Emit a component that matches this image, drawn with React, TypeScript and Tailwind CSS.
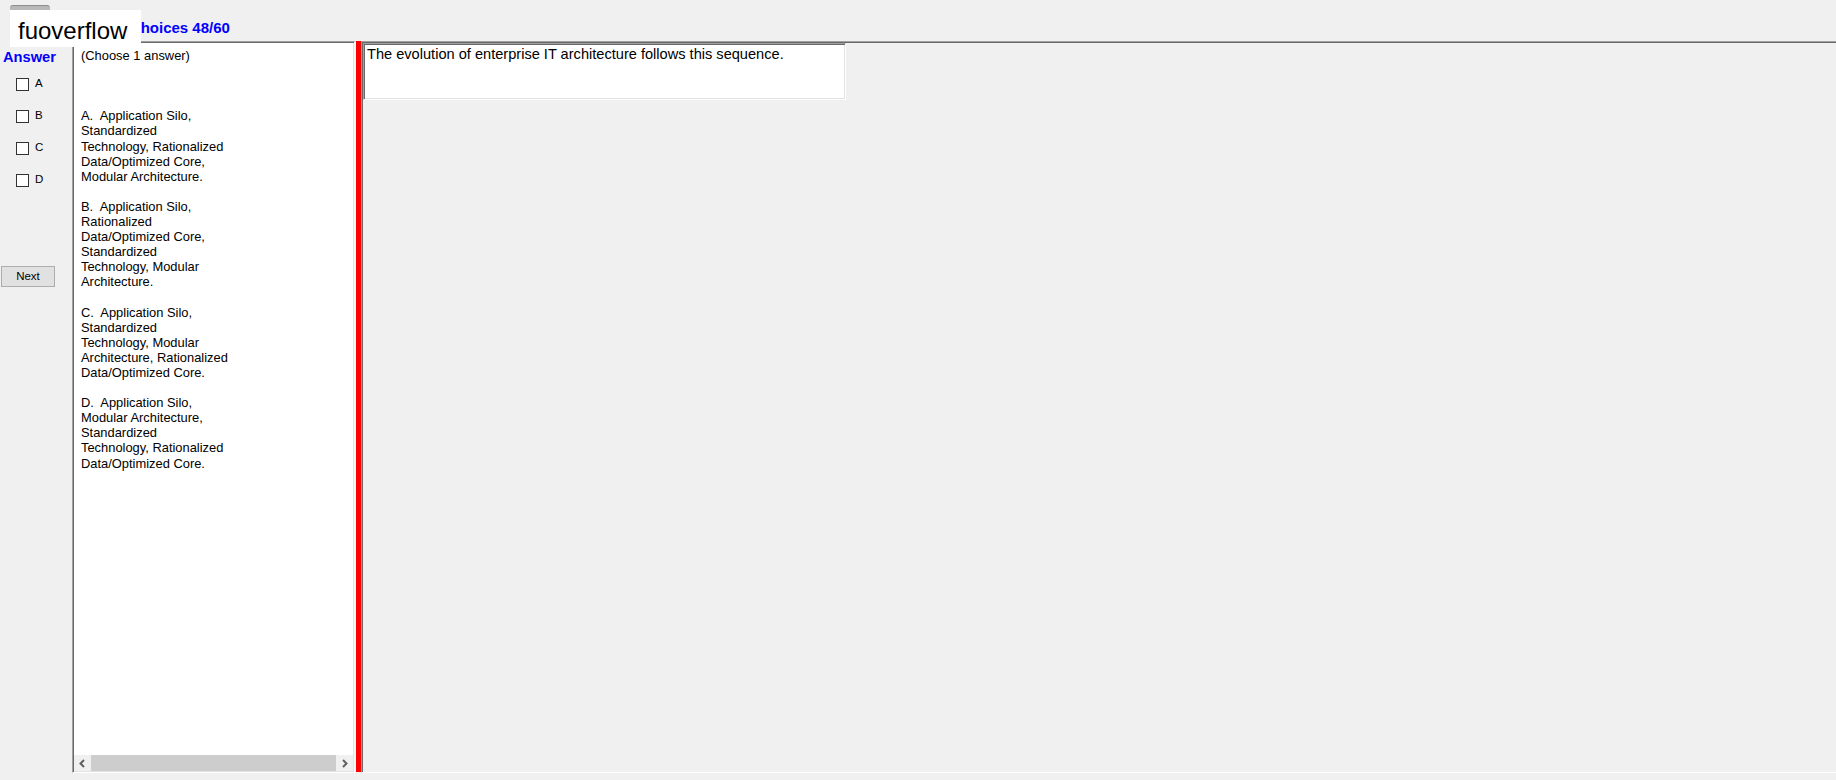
import React from "react";

// question body, one entry per rendered line (the label wraps narrow)
const questionLines: string[] = [
    "(Choose 1 answer)",
    "",
    "",
    "",
    "A.  Application Silo,",
    "Standardized",
    "Technology, Rationalized",
    "Data/Optimized Core,",
    "Modular Architecture.",
    "",
    "B.  Application Silo,",
    "Rationalized",
    "Data/Optimized Core,",
    "Standardized",
    "Technology, Modular",
    "Architecture.",
    "",
    "C.  Application Silo,",
    "Standardized",
    "Technology, Modular",
    "Architecture, Rationalized",
    "Data/Optimized Core.",
    "",
    "D.  Application Silo,",
    "Modular Architecture,",
    "Standardized",
    "Technology, Rationalized",
    "Data/Optimized Core.",
];

const options = ["A", "B", "C", "D"];

function Chevron({ dir }: { dir: "left" | "right" }) {
    return (
        <svg width="9" height="9" viewBox="0 0 9 9">
            <path
                d={dir === "left" ? "M6 1 L2.5 4.5 L6 8" : "M3 1 L6.5 4.5 L3 8"}
                fill="none"
                stroke="#606060"
                strokeWidth="2"
            />
        </svg>
    );
}

export default function App() {
    return (
        <div
            className="relative w-[1836px] h-[780px] overflow-hidden bg-[#f0f0f0] text-black"
            style={{ fontFamily: '"Liberation Sans", Arial, sans-serif' }}
        >
            {/* small grey tab peeking out behind the brand label */}
            <div className="absolute left-[10px] top-[5px] w-[40px] h-[12px] rounded-t-[3px] bg-[#b8b8b8] border-t border-[#8e8e8e]" />

            {/* brand label sitting on top of the header */}
            <div className="absolute z-10 left-[10px] top-[10px] w-[131px] h-[37px] overflow-hidden bg-white pl-[8px] text-[24px] leading-[41px] text-black">
                fuoverflow
            </div>

            {/* header */}
            <div className="h-[41px] pl-[69px] pt-[16px]">
                <span className="text-[15px] leading-[18px] font-bold text-[#0000ff]">
                    Multiple Choices 48/60
                </span>
            </div>

            <div className="flex h-[732px]">
                {/* answer column */}
                <div className="w-[72px] shrink-0 flex flex-col">
                    <div className="pl-[3px] pt-[7px] text-[14.67px] leading-[18px] font-bold text-[#0000ff]">
                        Answer
                    </div>
                    <div className="mt-[2px] flex flex-col">
                        {options.map((opt) => (
                            <label key={opt} className="h-[32px] pl-[16px] flex items-center gap-[6px] text-[11.5px]">
                                <span className="w-[13px] h-[13px] border border-[#333333] bg-white" />
                                <span>{opt}</span>
                            </label>
                        ))}
                    </div>
                    <button className="mt-[70px] ml-[1px] w-[54px] h-[21px] border border-[#adadad] bg-[#e1e1e1] text-[11.5px] leading-[19px] text-black">
                        Next
                    </button>
                </div>

                {/* question text panel */}
                <div className="w-[284px] shrink-0 flex flex-col border-t border-l border-[#a0a0a0] border-r-2 border-r-[#f7f7f7] border-b border-b-white bg-white shadow-[inset_1px_1px_0_#696969,inset_-1px_-1px_0_#e3e3e3]">
                    <div className="flex-1 overflow-hidden pt-[6px] pl-[8px] text-[12.9px] leading-[15.1px]">
                        {questionLines.map((line, i) => (
                            <div key={i} className="h-[15.1px] whitespace-pre">
                                {line}
                            </div>
                        ))}
                    </div>
                    {/* horizontal scroll bar */}
                    <div className="h-[16px] mb-[1px] ml-[1px] mr-[1px] flex bg-[#f0f0f0]">
                        <div className="w-[17px] flex items-center justify-center">
                            <Chevron dir="left" />
                        </div>
                        <div className="flex-1 bg-[#cdcdcd]" />
                        <div className="w-[17px] flex items-center justify-center">
                            <Chevron dir="right" />
                        </div>
                    </div>
                </div>

                {/* splitter */}
                <div className="w-[5px] h-[731px] shrink-0 bg-[#ff0000]" />

                {/* stem panel */}
                <div className="flex-1 border-t border-l border-[#a0a0a0] border-b border-b-white shadow-[inset_1px_1px_0_#696969]">
                    <div className="ml-[1px] mt-[1px] w-[483px] h-[57px] border border-[#a0a0a0] border-b-white border-r-white bg-white shadow-[inset_1px_1px_0_#696969,inset_-1px_-1px_0_#e3e3e3] pl-[3px] pt-[2px] text-[14.6px] leading-[17px]">
                        The evolution of enterprise IT architecture follows this sequence.
                    </div>
                </div>
            </div>
        </div>
    );
}
